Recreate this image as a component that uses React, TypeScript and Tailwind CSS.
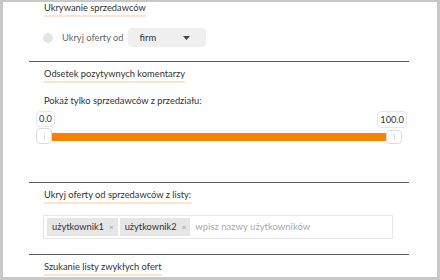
import React from "react";

const font = { fontFamily: "Lato, 'Noto Sans', sans-serif" };

function Title({ children, first = false }: { children: React.ReactNode; first?: boolean }) {
  return (
    <div className={"flex pl-[15px] leading-[12px] " + (first ? "" : "mt-[6px]")}>
      <span className="block text-[9.3px] leading-[12px] text-[#333] border-b-2 border-[#fde3cb] pb-[1px]">
        {children}
      </span>
    </div>
  );
}

function Divider({ className = "" }: { className?: string }) {
  return <div className={"h-px bg-[#5c5c5c] " + className} />;
}

function Tag({ label }: { label: string }) {
  return (
    <div className="flex items-center h-[18px] bg-[#e6e6e6] pl-[5px] pr-[4px] text-[9.3px] leading-[12px] text-[#333]">
      <span>{label}</span>
      <span className="ml-[5px] text-[8px] text-[#999]">×</span>
    </div>
  );
}

export default function App() {
  return (
    <div
      style={font}
      className="w-[440px] h-[280px] box-border overflow-hidden bg-white border-solid border-[#c8c8c8] border-l-[3px] border-r-[3px] border-t-2 border-b-[3px] leading-[12px]"
    >
      <div className="ml-[26px] w-[380px]">
        {/* Section 1 */}
        <Title first>Ukrywanie sprzedawców</Title>
        <div className="flex items-center pl-[14px] mt-[11px] h-[19px]">
          <div className="w-[10px] h-[10px] rounded-full bg-[#e4e4e4]" />
          <span className="ml-[9px] text-[9.3px] text-[#666]">Ukryj oferty od</span>
          <div className="ml-[4px] w-[78px] h-[19px] bg-[#efefef] rounded-sm flex items-center pl-[12px] pr-[16px] justify-between">
            <span className="text-[9.5px] text-[#333]">firm</span>
            <svg width="7" height="4" viewBox="0 0 7 4">
              <path d="M0 0 L7 0 L3.5 4 Z" fill="#444" />
            </svg>
          </div>
        </div>
        <Divider className="mt-[14px]" />

        {/* Section 2 */}
        <Title>Odsetek pozytywnych komentarzy</Title>
        <div className="pl-[15px] mt-[12px] text-[9.3px] leading-[12px] text-[#333]">
          Pokaż tylko sprzedawców z przedziału:
        </div>
        <div className="ml-[7px] w-[371px] mt-[4px] flex justify-between items-start">
          <div className="h-[16px] px-[2px] border border-[#e6e6e6] rounded-sm text-[9.3px] leading-[14px] text-[#333] bg-white">
            0.0
          </div>
          <div className="h-[17px] px-[2px] border border-[#e6e6e6] rounded-sm text-[9.3px] leading-[15px] text-[#333] bg-white">
            100.0
          </div>
        </div>
        <div className="relative ml-[7px] w-[366px] h-[16px]">
          <div className="absolute left-[16px] right-[16px] top-[5px] h-[8px] bg-[#ff7f00]" />
          <div className="absolute left-0 top-0 w-[16px] h-[16px] bg-white border border-[#dcdcdc] rounded-sm flex items-center justify-center">
            <div className="w-px h-[7px] bg-[#e0e0e0]" />
          </div>
          <div className="absolute right-0 top-[2px] w-[16px] h-[14px] bg-white border border-[#dcdcdc] rounded-sm flex items-center justify-center">
            <div className="w-px h-[7px] bg-[#e0e0e0]" />
          </div>
        </div>
        <Divider className="mt-[38px]" />

        {/* Section 3 */}
        <Title>Ukryj oferty od sprzedawców z listy:</Title>
        <div className="ml-[14px] w-[350px] h-[24px] mt-[11px] border border-[#e6e6e6] flex items-center pl-[3px] gap-[2px]">
          <Tag label="użytkownik1" />
          <Tag label="użytkownik2" />
          <span className="ml-[3px] text-[9.5px] text-[#aaa]">wpisz nazwy użytkowników</span>
        </div>
        <Divider className="mt-[15px]" />

        {/* Section 4 */}
        <Title>Szukanie listy zwykłych ofert</Title>
      </div>
    </div>
  );
}
